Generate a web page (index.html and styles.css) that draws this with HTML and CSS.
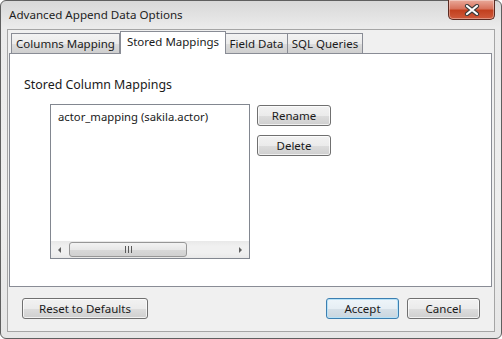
FILE: index.html
```html
<!DOCTYPE html>
<html lang="en">
<head>
  <meta charset="UTF-8" />
  <title>Advanced Append Data Options</title>
  <meta name="viewport" content="width=device-width, initial-scale=1" />
  <link rel="stylesheet" href="styles.css">
</head>
<body>
  <div class="window">
    <div class="titlebar">
      <span class="title">Advanced Append Data Options</span>
      <button class="close-btn" title="Close">
        <svg width="16" height="12" viewBox="0 0 16 12">
          <path d="M3 2 L13 10 M13 2 L3 10" stroke="#3b3b3b" stroke-width="4.2" stroke-linecap="round" />
          <path d="M3 2 L13 10 M13 2 L3 10" stroke="#ffffff" stroke-width="2.2" stroke-linecap="round" />
        </svg>
      </button>
    </div>

    <div class="client">
      <div class="tabs">
        <div class="tab tab-columns">Columns Mapping</div>
        <div class="tab tab-stored active">Stored Mappings</div>
        <div class="tab tab-field">Field Data</div>
        <div class="tab tab-sql">SQL Queries</div>
      </div>

      <div class="panel">
        <div class="group-label">Stored Column Mappings</div>
        <div class="mapping-row">
          <div class="listbox">
            <div class="list-items">
              <div class="list-item">actor_mapping (sakila.actor)</div>
            </div>
            <div class="hscroll">
              <span class="scroll-arrow arrow-left"></span>
              <div class="scroll-track">
                <div class="scroll-thumb"><span class="grip"></span></div>
              </div>
              <span class="scroll-arrow arrow-right"></span>
            </div>
          </div>
          <div class="side-buttons">
            <button class="btn btn-side">Rename</button>
            <button class="btn btn-side">Delete</button>
          </div>
        </div>
      </div>

      <div class="footer">
        <button class="btn btn-reset">Reset to Defaults</button>
        <span class="spacer"></span>
        <button class="btn btn-dialog default">Accept</button>
        <button class="btn btn-dialog">Cancel</button>
      </div>
    </div>
  </div>
</body>
</html>
```

FILE: styles.css
```css
body {
  margin: 0;
  padding: 0;
  font-family: "Segoe UI", "Noto Sans", sans-serif;
  font-size: 11.5px;
  color: #1a1a1a;
  background: #ffffff;
}

.window {
  box-sizing: border-box;
  width: 502px;
  height: 339px;
  border: 1px solid #5f5f5f;
  border-radius: 6px;
  padding: 0 6px 6px 6px;
  background: linear-gradient(#d8d8d8, #ebebeb 8%, #eeeeee 60%, #e6e6e6);
  display: flex;
  flex-direction: column;
}

.titlebar {
  height: 28px;
  display: flex;
  align-items: flex-start;
}

.title {
  margin-top: 6px;
  padding-left: 2px;
  font-size: 11.6px;
  color: #1e1e1e;
}

.close-btn {
  margin-left: auto;
  margin-top: -1px;
  width: 47px;
  height: 20px;
  padding: 0;
  border: 1px solid #5b2a21;
  border-top: none;
  border-radius: 0 0 5px 5px;
  background: linear-gradient(#e9a99a, #d8735d 45%, #c2401f 55%, #cf5a3c);
  box-shadow: inset 0 0 0 1px rgba(255,255,255,0.35);
  display: flex;
  align-items: center;
  justify-content: center;
}

.client {
  box-sizing: border-box;
  height: 303px;
  border: 1px solid #a5a5a5;
  background: #f0f0f0;
  display: flex;
  flex-direction: column;
}

.tabs {
  margin-top: 1px;
  height: 22px;
  padding-left: 3px;
  display: flex;
  align-items: flex-end;
}

.tab {
  box-sizing: border-box;
  height: 20px;
  border: 1px solid #898c95;
  border-bottom: none;
  background: linear-gradient(#f3f3f3, #ebebeb 50%, #dddddd 51%, #cfcfcf);
  display: flex;
  align-items: center;
  justify-content: center;
  padding-bottom: 1px;
}

.tab + .tab {
  border-left: none;
}

.tab.active {
  height: 23px;
  margin-bottom: -1px;
  position: relative;
  z-index: 1;
  background: #ffffff;
  border-left: 1px solid #898c95;
  padding-bottom: 3px;
}

.tab-columns { width: 109px; }
.tab-stored  { width: 106px; }
.tab-field   { width: 62px; }
.tab-sql     { width: 75px; }

.panel {
  box-sizing: border-box;
  margin-left: 1px;
  width: 483px;
  height: 234px;
  border: 1px solid #898c95;
  background: #ffffff;
  padding: 22px 14px 0 14px;
}

.group-label {
  font-size: 12.4px;
  line-height: 17px;
}

.mapping-row {
  margin-top: 11px;
  margin-left: 26px;
  display: flex;
  gap: 7px;
  align-items: flex-start;
}

.listbox {
  box-sizing: border-box;
  width: 200px;
  height: 155px;
  border: 1px solid #828790;
  background: #ffffff;
  display: flex;
  flex-direction: column;
}

.list-items {
  flex: 1;
  padding: 4px 0 0 7px;
}

.list-item {
  font-size: 11.3px;
  line-height: 16px;
}

.hscroll {
  height: 17px;
  display: flex;
  background: linear-gradient(#e8e8e8, #f0f0f0 30%, #f0f0f0 70%, #e8e8e8);
}

.scroll-arrow {
  width: 17px;
  display: flex;
  align-items: center;
  justify-content: center;
}

.arrow-left::before {
  content: "";
  border-top: 3px solid transparent;
  border-bottom: 3px solid transparent;
  border-right: 3px solid #606060;
}

.arrow-right::before {
  content: "";
  border-top: 3px solid transparent;
  border-bottom: 3px solid transparent;
  border-left: 3px solid #606060;
}

.scroll-track {
  flex: 1;
  padding: 1px 0 1px 1px;
  display: flex;
}

.scroll-thumb {
  box-sizing: border-box;
  width: 118px;
  border: 1px solid #979797;
  border-radius: 3px;
  background: linear-gradient(#f3f3f3, #e8e8e8 50%, #d9d9d9 51%, #d0d0d0);
  display: flex;
  align-items: center;
  justify-content: center;
}

.grip {
  width: 7px;
  height: 7px;
  background: repeating-linear-gradient(90deg, #5a5a5a 0 1px, transparent 1px 3px);
}

.side-buttons {
  margin-top: 1px;
  display: flex;
  flex-direction: column;
  gap: 9px;
}

.btn {
  box-sizing: border-box;
  height: 21px;
  padding: 0 0 1px 0;
  border: 1px solid #707070;
  border-radius: 3px;
  background: linear-gradient(#f2f2f2, #ebebeb 50%, #dddddd 51%, #cfcfcf);
  box-shadow: inset 0 0 0 1px rgba(255,255,255,0.7);
  font-family: inherit;
  font-size: 11.5px;
  color: #1a1a1a;
}

.btn-side {
  width: 74px;
}

.footer {
  flex: 1;
  display: flex;
  align-items: flex-start;
  padding: 11px 14px 0 14px;
  gap: 8px;
}

.spacer {
  flex: 1;
}

.btn-reset {
  width: 126px;
}

.btn-dialog {
  width: 73px;
}

.btn.default {
  border-color: #3c7fb1;
  background: linear-gradient(#eef5fa, #e6eef4 50%, #d6e0e8 51%, #cad6df);
  box-shadow: inset 0 0 0 1px #b8e2f7;
}
```
